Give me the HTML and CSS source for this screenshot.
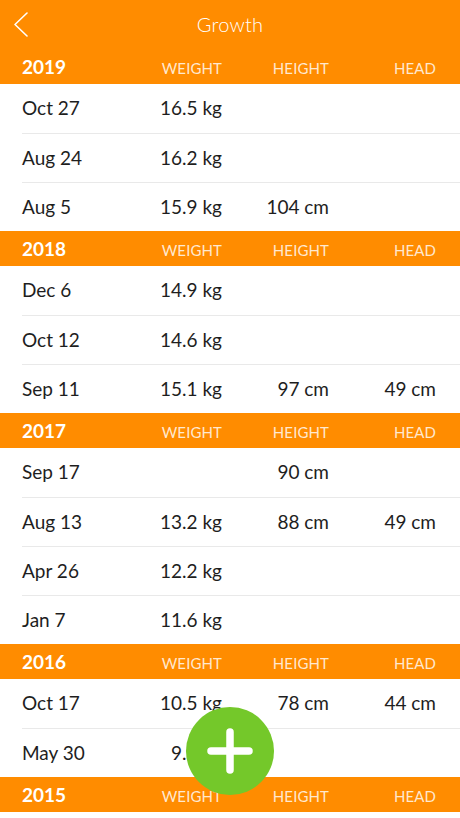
FILE: index.html
```html
<!DOCTYPE html>
<html>
<head>
<meta charset="utf-8">
<link rel="stylesheet" href="styles.css">
</head>
<body>
<div class="screen">
  <header class="nav">
    <svg class="back" width="15" height="25" viewBox="0 0 15 25"><path d="M14 1 L2 12.5 L14 24" fill="none" stroke="#fff" stroke-width="1.6" stroke-linecap="round" stroke-linejoin="round"/></svg>
    <div class="title">Growth</div>
  </header>

  <section>
    <div class="sec-head"><span class="year">2019</span><span class="lbl">WEIGHT</span><span class="lbl">HEIGHT</span><span class="lbl">HEAD</span></div>
    <div class="row"><span>Oct 27</span><span>16.5 kg</span><span></span><span></span></div>
    <div class="row"><span>Aug 24</span><span>16.2 kg</span><span></span><span></span></div>
    <div class="row"><span>Aug 5</span><span>15.9 kg</span><span>104 cm</span><span></span></div>
  </section>

  <section>
    <div class="sec-head"><span class="year">2018</span><span class="lbl">WEIGHT</span><span class="lbl">HEIGHT</span><span class="lbl">HEAD</span></div>
    <div class="row"><span>Dec 6</span><span>14.9 kg</span><span></span><span></span></div>
    <div class="row"><span>Oct 12</span><span>14.6 kg</span><span></span><span></span></div>
    <div class="row"><span>Sep 11</span><span>15.1 kg</span><span>97 cm</span><span>49 cm</span></div>
  </section>

  <section>
    <div class="sec-head"><span class="year">2017</span><span class="lbl">WEIGHT</span><span class="lbl">HEIGHT</span><span class="lbl">HEAD</span></div>
    <div class="row"><span>Sep 17</span><span></span><span>90 cm</span><span></span></div>
    <div class="row"><span>Aug 13</span><span>13.2 kg</span><span>88 cm</span><span>49 cm</span></div>
    <div class="row"><span>Apr 26</span><span>12.2 kg</span><span></span><span></span></div>
    <div class="row"><span>Jan 7</span><span>11.6 kg</span><span></span><span></span></div>
  </section>

  <section>
    <div class="sec-head"><span class="year">2016</span><span class="lbl">WEIGHT</span><span class="lbl">HEIGHT</span><span class="lbl">HEAD</span></div>
    <div class="row"><span>Oct 17</span><span>10.5 kg</span><span>78 cm</span><span>44 cm</span></div>
    <div class="row"><span>May 30</span><span>9.8 kg</span><span></span><span></span></div>
  </section>

  <section>
    <div class="sec-head"><span class="year">2015</span><span class="lbl">WEIGHT</span><span class="lbl">HEIGHT</span><span class="lbl">HEAD</span></div>
  </section>

  <button class="fab" aria-label="Add">
    <svg width="46" height="46" viewBox="0 0 46 46"><path d="M23 4 V42 M4 23 H42" stroke="#fff" stroke-width="7.5" stroke-linecap="round"/></svg>
  </button>
</div>
</body>
</html>
```

FILE: styles.css
```css
* { box-sizing: border-box; }
html, body {
  margin: 0;
  padding: 0;
  background: #fff;
}
body {
  font-family: Lato, "Open Sans", sans-serif;
  color: #222;
}
.screen {
  position: relative;
  width: 460px;
  height: 818px;
  overflow: hidden;
  background: #fff;
}
.nav {
  position: relative;
  height: 49px;
  background: #ff8c00;
  display: flex;
  align-items: center;
  justify-content: center;
}
.back {
  position: absolute;
  left: 13px;
  top: 12px;
}
.title {
  color: #fff;
  font-size: 20px;
  font-weight: 300;
  letter-spacing: 0.2px;
  margin-top: -2px;
}
.sec-head {
  height: 35px;
  background: #ff8c00;
  display: grid;
  grid-template-columns: 110px 90px 107px 107px;
  align-items: baseline;
  padding: 6px 0 0 22px;
}
.year {
  color: #fff;
  font-weight: 700;
  font-size: 19px;
}
.lbl {
  color: rgba(255, 255, 255, 0.82);
  font-size: 15px;
  font-weight: 400;
  text-align: right;
  letter-spacing: 0.1px;
}
.row {
  height: 49px;
  margin-left: 22px;
  padding-bottom: 2px;
  display: grid;
  grid-template-columns: 110px 90px 107px 107px;
  align-items: center;
  font-size: 19px;
  color: #1e1e1e;
}
.row + .row {
  border-top: 1px solid #e9e9e9;
}
.row span:not(:first-child) {
  text-align: right;
}
.fab {
  position: absolute;
  left: 186px;
  top: 707px;
  width: 88px;
  height: 88px;
  border-radius: 50%;
  border: none;
  padding: 0;
  background: #74c82a;
  display: flex;
  align-items: center;
  justify-content: center;
}
```
